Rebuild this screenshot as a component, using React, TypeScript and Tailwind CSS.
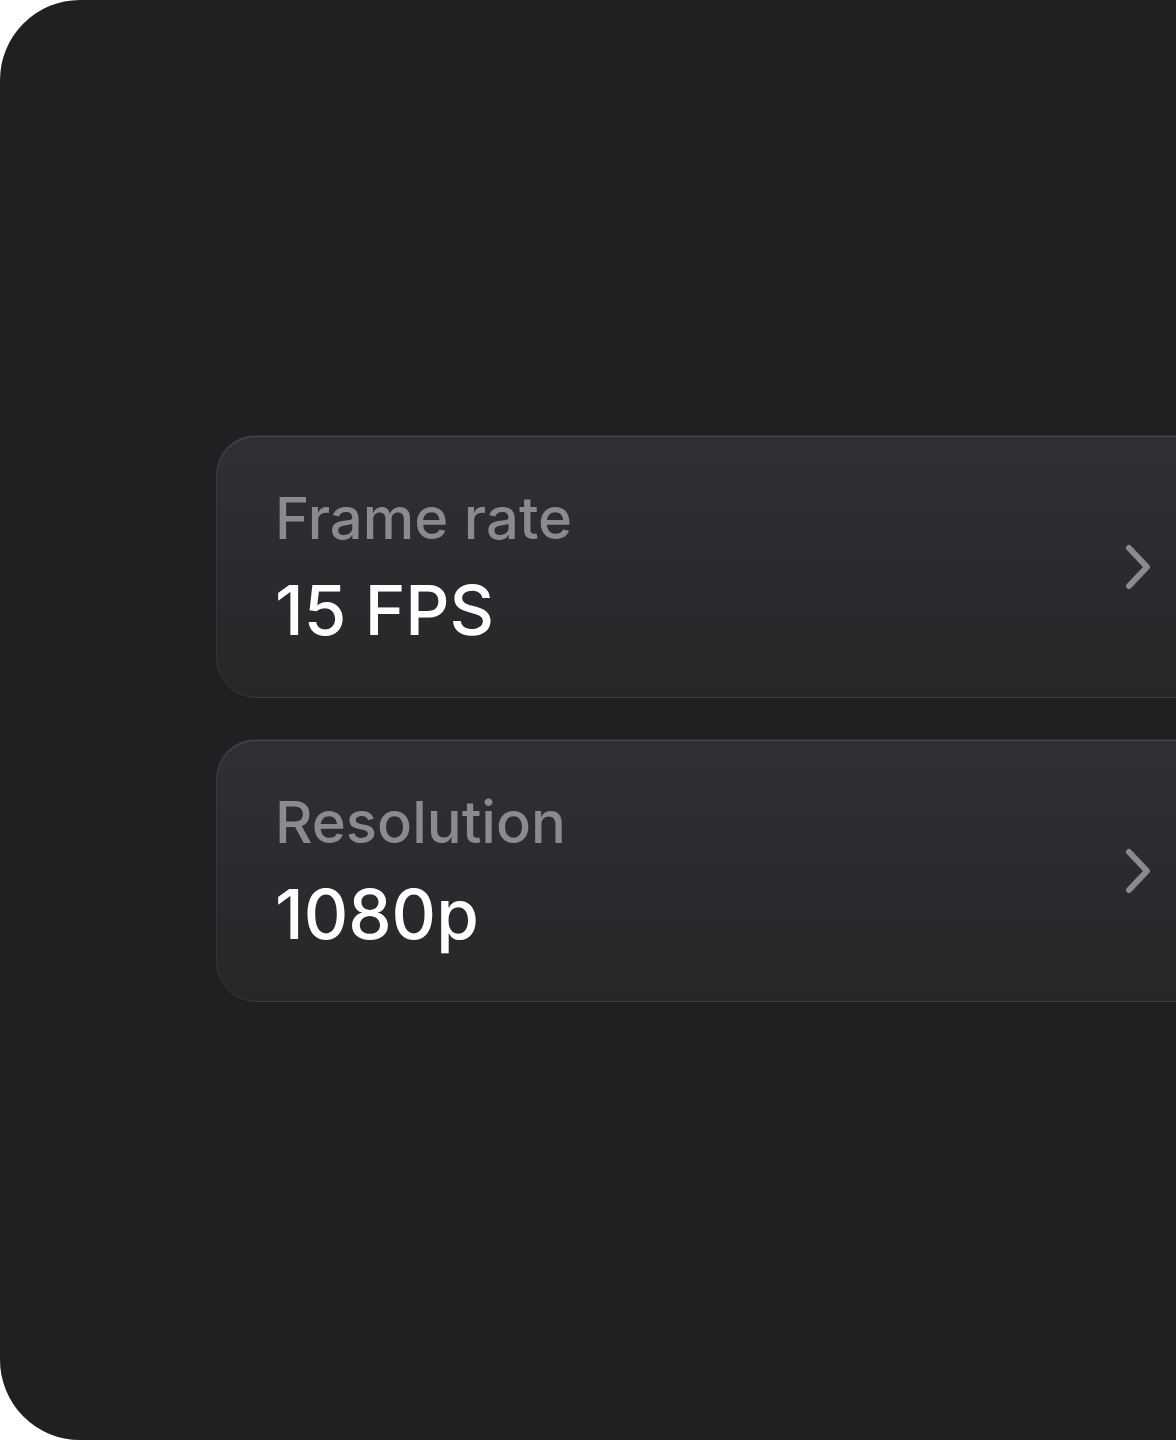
import * as React from "react";

const SETTINGS = [
  { label: "Frame rate", value: "15 FPS" },
  { label: "Resolution", value: "1080p" },
];

function Chevron() {
  return (
    <svg width="32" height="48" viewBox="0 0 32 48" fill="none" aria-hidden="true">
      <path
        d="M8 5 L26 24 L8 43"
        stroke="#8a8b8e"
        strokeWidth="6"
        strokeLinecap="round"
        strokeLinejoin="round"
      />
    </svg>
  );
}

function SettingRow({ label, value }: { label: string; value: string }) {
  return (
    <button
      type="button"
      className="flex w-[1040px] shrink-0 items-center justify-between rounded-[40px] border border-white/[0.06] bg-gradient-to-b from-[#2f3033] to-[#262729] pt-[47px] pb-[47px] pl-[58px] pr-[102px] text-left shadow-[inset_0_1px_0_rgba(255,255,255,0.1)]"
    >
      <div className="flex flex-col gap-[18px]">
        <span className="text-[58px] leading-[70px] font-medium text-[#8a8b8e]">{label}</span>
        <span className="text-[69px] leading-[79px] font-medium text-white">{value}</span>
      </div>
      <Chevron />
    </button>
  );
}

export default function App() {
  return (
    <div className="min-h-[1440px] bg-white font-['Inter',sans-serif]">
      <div className="flex h-[1440px] flex-col gap-[41px] overflow-hidden rounded-l-[80px] bg-[#1f2022] pt-[435px] pl-[216px]">
        {SETTINGS.map((s) => (
          <SettingRow key={s.label} label={s.label} value={s.value} />
        ))}
      </div>
    </div>
  );
}
